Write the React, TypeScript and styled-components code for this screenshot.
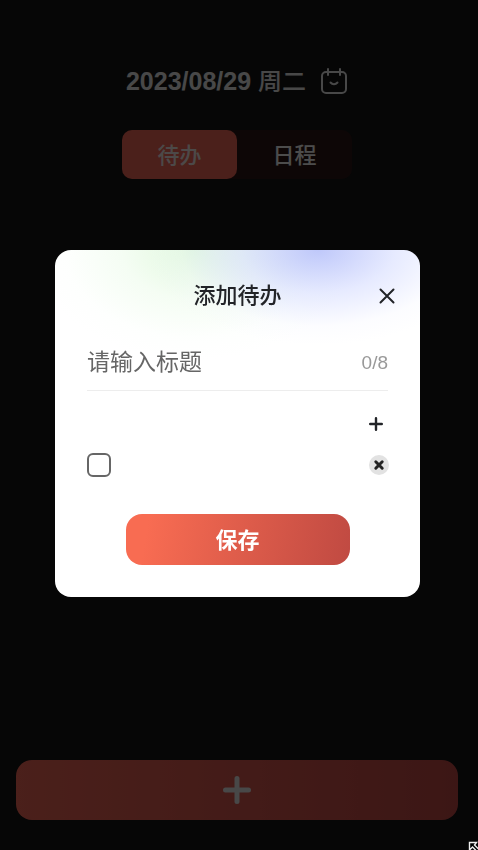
import React, { useState } from "react";
import styled, { createGlobalStyle } from "styled-components";

const GlobalStyle = createGlobalStyle`
  * { box-sizing: border-box; }
  body {
    margin: 0;
    background: #141414;
    font-family: "Liberation Sans", "Noto Sans CJK SC", sans-serif;
  }
  button { border: 0; padding: 0; background: none; font: inherit; color: inherit; cursor: pointer; }
`;

const Page = styled.main`
  min-height: 100vh;
  display: flex;
  flex-direction: column;
  align-items: center;
  padding: 62px 20px 30px 16px;
  color: #f0f0f0;
`;

const DateButton = styled.button`
  display: flex;
  align-items: center;
  gap: 14px;
  height: 38px;
  font-size: 25px;
  line-height: 38px;
`;

const DateText = styled.span`
  font-weight: 700;
`;

const Weekday = styled.span`
  font-size: 24px;
  font-weight: 500;
`;

const Tabs = styled.div`
  display: grid;
  grid-template-columns: 1fr 1fr;
  width: 230px;
  height: 49px;
  margin-top: 30px;
  border-radius: 10px;
  background: #2e1716;
`;

const Tab = styled.button<{ $active?: boolean }>`
  padding-bottom: 3px;
  border-radius: 10px;
  font-size: 22px;
  font-weight: 500;
  color: ${(p) => (p.$active ? "#fff4f0" : "#ffffff")};
  background: ${(p) => (p.$active ? "#fa6b5a" : "transparent")};
`;

const AddButton = styled.button`
  display: flex;
  align-items: center;
  justify-content: center;
  width: 100%;
  height: 60px;
  margin-top: auto;
  border-radius: 16px;
  color: #f0f0f0;
  background: linear-gradient(90deg, #fa6b5a, #c94c48);
`;

const Overlay = styled.div`
  position: fixed;
  inset: 0;
  display: flex;
  align-items: center;
  justify-content: center;
  padding: 0 58px 3px 55px;
  background: rgba(0, 0, 0, 0.7);
`;

const Dialog = styled.form`
  width: 100%;
  padding: 27px 32px 32px;
  border-radius: 16px;
  color: #222428;
  background:
    radial-gradient(ellipse 170px 95px at 72% 0, rgba(184, 194, 250, 0.9), rgba(210, 217, 255, 0.55) 45%, rgba(240, 242, 255, 0.2) 80%, transparent),
    radial-gradient(ellipse 160px 110px at 38% 0, rgba(222, 248, 218, 0.95), rgba(238, 252, 236, 0.6) 45%, rgba(248, 255, 248, 0.2) 80%, transparent),
    #fff;
`;

const Header = styled.header`
  display: grid;
  grid-template-columns: 24px 1fr 24px;
  align-items: center;
  height: 38px;
  margin: 0 -11px;
`;

const Title = styled.h1`
  margin: 0;
  text-align: center;
  font-size: 22px;
  font-weight: 500;
  line-height: 38px;
`;

const IconButton = styled.button`
  display: flex;
  align-items: center;
  justify-content: center;
  width: 24px;
  height: 24px;
`;

const TitleField = styled.label`
  display: flex;
  align-items: center;
  height: 56px;
  margin-top: 20px;
  border-bottom: 1px solid #ededed;
`;

const TitleInput = styled.input`
  flex: 1;
  min-width: 0;
  padding: 0;
  border: 0;
  outline: 0;
  background: transparent;
  color: #222428;
  font: inherit;
  font-size: 23px;
  &::placeholder { color: #666; opacity: 1; }
`;

const Counter = styled.span`
  font-size: 19px;
  color: #999;
`;

const AddRow = styled.div`
  display: flex;
  justify-content: flex-end;
  margin-top: 21px;
`;

const ItemRow = styled.div`
  display: flex;
  align-items: center;
  gap: 8px;
  height: 26px;
  margin-top: 16px;
  margin-right: -3px;
`;

const CheckBox = styled.input`
  appearance: none;
  width: 24px;
  height: 24px;
  margin: 0;
  border: 2px solid #666;
  border-radius: 6px;
  &:checked { background: #fa6b5a; }
`;

const ItemInput = styled(TitleInput)`
  font-size: 19px;
`;

const SaveButton = styled.button`
  display: block;
  width: 224px;
  height: 51px;
  margin: 36px auto 0;
  padding-bottom: 4px;
  border-radius: 16px;
  font-size: 22px;
  font-weight: 700;
  color: #fff;
  background: linear-gradient(100deg, #f86c52 10%, #c04a42);
`;

const Cursor = styled.svg`
  position: fixed;
  right: 0;
  bottom: 0;
`;

const CalendarIcon = () => (
  <svg width="28" height="28" viewBox="0 0 28 28" fill="none" stroke="currentColor" strokeWidth="2" strokeLinecap="round" aria-hidden="true">
    <rect x="2" y="5" width="24" height="21" rx="4" />
    <path d="M8 2v6M20 2v6M10.500 15.500c2 2.400 5 2.400 7 0" />
  </svg>
);

const CloseIcon = () => (
  <svg width="16" height="16" viewBox="0 0 16 16" stroke="currentColor" strokeWidth="2" strokeLinecap="round" aria-hidden="true">
    <path d="M1.500 1.500l13 13M14.500 1.500l-13 13" />
  </svg>
);

const PlusIcon = ({ size, stroke }: { size: number; stroke: number }) => (
  <svg width={size} height={size} viewBox={`0 0 ${size} ${size}`} stroke="currentColor" strokeWidth={stroke} strokeLinecap="round" aria-hidden="true">
    <path d={`M${size / 2} ${stroke / 2}V${size - stroke / 2}M${stroke / 2} ${size / 2}H${size - stroke / 2}`} />
  </svg>
);

const RemoveIcon = () => (
  <svg width="20" height="20" viewBox="0 0 20 20" aria-hidden="true">
    <circle cx="10" cy="10" r="10" fill="#e2e2e2" />
    <path d="M6.800 6.800l6.400 6.400M13.200 6.800l-6.400 6.400" stroke="#222" strokeWidth="3" strokeLinecap="round" />
  </svg>
);

export default function App() {
  const [title, setTitle] = useState("");
  return (
    <>
      <GlobalStyle />
      <Page>
        <DateButton type="button">
          <DateText>2023/08/29 <Weekday>周二</Weekday></DateText>
          <CalendarIcon />
        </DateButton>
        <Tabs>
          <Tab type="button" $active>待办</Tab>
          <Tab type="button">日程</Tab>
        </Tabs>
        <AddButton type="button" aria-label="添加">
          <PlusIcon size={28} stroke={5} />
        </AddButton>
      </Page>
      <Overlay>
        <Dialog role="dialog" aria-labelledby="dialog-title" onSubmit={(e) => e.preventDefault()}>
          <Header>
            <span />
            <Title id="dialog-title">添加待办</Title>
            <IconButton type="button" aria-label="关闭"><CloseIcon /></IconButton>
          </Header>
          <TitleField>
            <TitleInput aria-label="标题" placeholder="请输入标题" maxLength={8} value={title} onChange={(e) => setTitle(e.target.value)} />
            <Counter>{title.length}/8</Counter>
          </TitleField>
          <AddRow>
            <IconButton type="button" aria-label="添加一项"><PlusIcon size={14} stroke={2.4} /></IconButton>
          </AddRow>
          <ItemRow>
            <CheckBox type="checkbox" aria-label="完成" />
            <ItemInput aria-label="待办内容" />
            <IconButton type="button" aria-label="删除"><RemoveIcon /></IconButton>
          </ItemRow>
          <SaveButton type="submit">保存</SaveButton>
        </Dialog>
      </Overlay>
      <Cursor width="10" height="9" viewBox="0 0 10 9" fill="#000" stroke="#eee" strokeWidth="1.400" aria-hidden="true">
        <path d="M1.500 1.500h7L6.500 4l5 5-2 2-5-5-3 3z" />
      </Cursor>
    </>
  );
}
